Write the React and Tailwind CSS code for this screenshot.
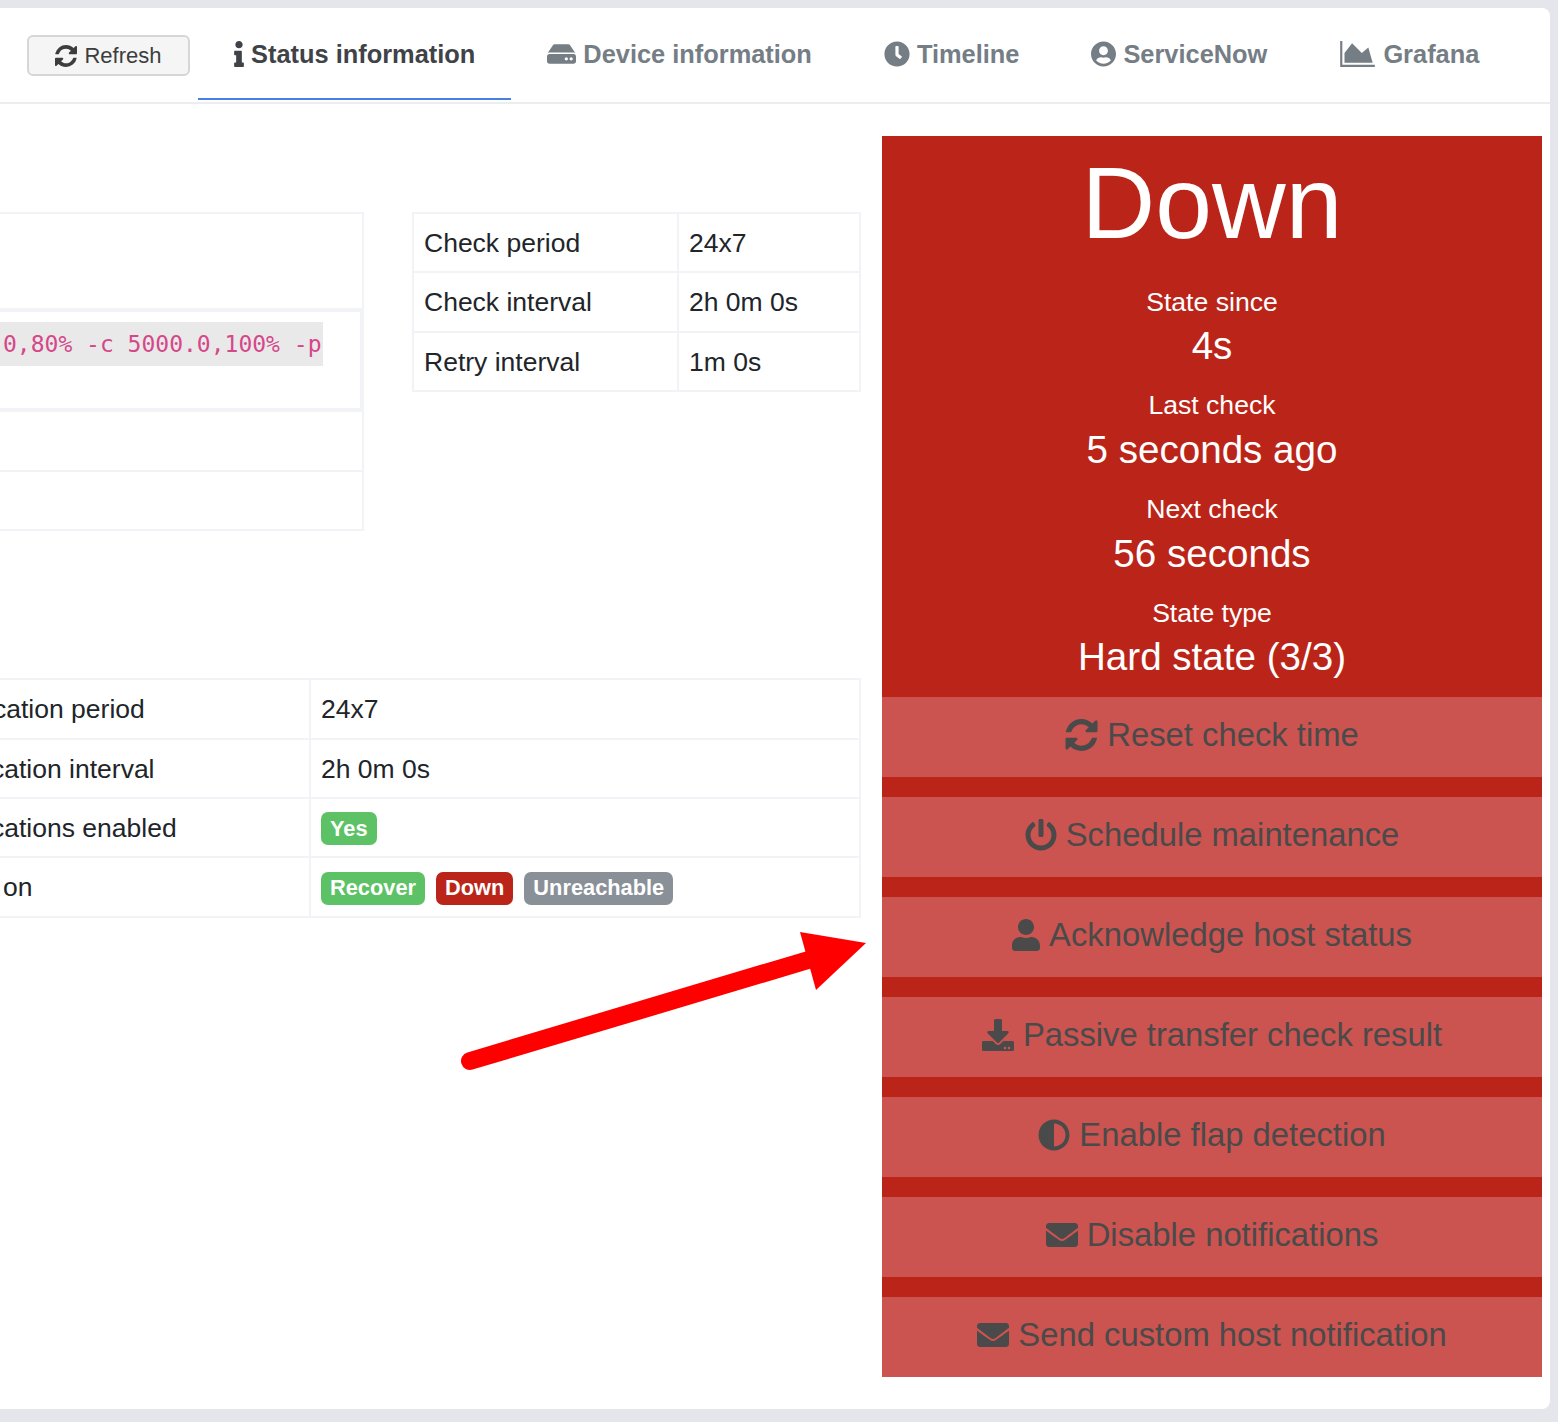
import {
  FaAdjust,
  FaClock,
  FaDownload,
  FaEnvelope,
  FaHdd,
  FaInfo,
  FaPowerOff,
  FaUser,
  FaUserCircle,
} from "react-icons/fa"

const RefreshIcon = ({ className }) => (
  <svg className={className} viewBox="128 128 1536 1536" fill="currentColor">
    <path d="M1639 1056q0 5-1 7-64 268-268 434.5t-478 166.5q-146 0-282.5-55t-243.5-157l-129 129q-19 19-45 19t-45-19-19-45v-448q0-26 19-45t45-19h448q26 0 45 19t19 45-19 45l-137 137q71 66 161 102t187 36q134 0 250-65t186-179q11-17 53-117 8-23 30-23h192q13 0 22.5 9.5t9.5 22.5zm25-800v448q0 26-19 45t-45 19h-448q-26 0-45-19t-19-45 19-45l138-138q-148-137-349-137-134 0-250 65t-186 179q-11 17-53 117-8 23-30 23h-199q-13 0-22.5-9.5t-9.5-22.5v-7q65-268 270-434.5t480-166.5q146 0 284 55.5t245 156.5l130-129q19-19 45-19t45 19 19 45z" />
  </svg>
)

const AreaChartIcon = ({ className }) => (
  <svg className={className} viewBox="0 128 2048 1536" fill="currentColor">
    <path d="M2048 1536v128h-2048v-1536h128v1408h1920zm-384-1024l256 896h-1664v-576l448-576 576 576z" />
  </svg>
)

const tabs = [
  { label: "Status information", icon: FaInfo, size: "h-[26px] w-[10px]", active: true },
  { label: "Device information", icon: FaHdd, size: "h-[26px] w-[29px]" },
  { label: "Timeline", icon: FaClock, size: "h-[26px] w-[26px]" },
  { label: "ServiceNow", icon: FaUserCircle, size: "h-[26px] w-[25px]" },
  { label: "Grafana", icon: AreaChartIcon, size: "h-[26px] w-[37px]" },
]

const facts = [
  { label: "State since", value: "4s" },
  { label: "Last check", value: "5 seconds ago" },
  { label: "Next check", value: "56 seconds" },
  { label: "State type", value: "Hard state (3/3)" },
]

const actions = [
  { label: "Reset check time", icon: RefreshIcon, size: "h-[32px] w-[33px]" },
  { label: "Schedule maintenance", icon: FaPowerOff, size: "h-[32px] w-[32px]" },
  { label: "Acknowledge host status", icon: FaUser, size: "h-[32px] w-[28px]" },
  { label: "Passive transfer check result", icon: FaDownload, size: "h-[32px] w-[32px]" },
  { label: "Enable flap detection", icon: FaAdjust, size: "h-[32px] w-[32px]" },
  { label: "Disable notifications", icon: FaEnvelope, size: "h-[32px] w-[32px]" },
  { label: "Send custom host notification", icon: FaEnvelope, size: "h-[32px] w-[32px]" },
]

const checks = [
  { label: "Check period", value: "24x7", height: "h-[59px]" },
  { label: "Check interval", value: "2h 0m 0s", height: "h-[60px]" },
  { label: "Retry interval", value: "1m 0s", height: "h-[59px]" },
]

const Badge = ({ color, children }) => (
  <span className={`inline-flex h-[33px] items-center rounded-[7px] px-[9px] pt-[1px] text-[21.8px] font-bold text-white ${color}`}>
    {children}
  </span>
)

const App = () => {
  return (
    <div className="relative h-[1422px] w-[1558px] overflow-hidden bg-[#e4e6eb] pt-2 font-['Liberation_Sans',Arial,sans-serif]">
      <div className="h-[1401px] w-[1550px] rounded-r-lg bg-white">
        <div className="flex h-[96px] border-b-2 border-[#ecedf0] pl-[27px]">
          <button className="mt-[27px] flex h-[41px] w-[163px] items-center justify-center gap-[7px] rounded-md border-2 border-[#d6d6d6] bg-[#f5f5f5] text-[22px] text-[#3d3d3d]">
            <RefreshIcon className="h-[22px] w-[22px]" />
            Refresh
          </button>
          <div className="ml-2 flex">
            {tabs.map((tab) => {
              const Icon = tab.icon
              return (
                <div
                  key={tab.label}
                  className={`flex h-[92px] items-center gap-[7px] border-b-2 px-9 pt-[2px] text-[25.4px] font-bold ${
                    tab.active ? "border-[#4a80e0] text-[#3f4347]" : "border-transparent text-[#757d85]"
                  }`}
                >
                  <Icon className={`shrink-0 ${tab.size}`} />
                  {tab.label}
                </div>
              )
            })}
          </div>
        </div>

        <div className="flex pt-8">
          <div className="w-[882px] pt-[76px] text-[26.5px] text-[#212529]">
            <div className="flex items-start">
              <div className="w-[364px] border-y-2 border-r-2 border-[#f2f3f7]">
                <div className="h-[98px] border-b-4 border-[#f2f3f7]"></div>
                <div className="flex h-[100px] items-start border-r-2 border-b-4 border-[#f2f3f7] pt-[10px]">
                  <code className="flex h-[44px] w-[323px] items-center whitespace-pre bg-[#e9e9e9] pl-[3px] font-['DejaVu_Sans_Mono',monospace] text-[23px] text-[#d6478a]">
                    0,80% -c 5000.0,100% -p
                  </code>
                </div>
                <div className="h-[60px] border-b-2 border-[#f2f3f7]"></div>
                <div className="h-[57px]"></div>
              </div>

              <table className="ml-[48px] w-[449px] table-fixed border-2 border-[#f2f3f7]">
                <tbody>
                  {checks.map((row) => (
                    <tr key={row.label} className={`${row.height} border-b-2 border-[#f2f3f7]`}>
                      <td className="w-[265px] border-r-2 border-[#f2f3f7] pl-[10px] pt-[2px]">{row.label}</td>
                      <td className="pl-[10px] pt-[2px]">{row.value}</td>
                    </tr>
                  ))}
                </tbody>
              </table>
            </div>

            <table className="mt-[147px] w-[861px] table-fixed border-y-2 border-r-2 border-[#f2f3f7]">
              <tbody>
                <tr className="h-[60px] border-b-2 border-[#f2f3f7]">
                  <td className="w-[310px] border-r-2 border-[#f2f3f7] pt-[2px]">
                    <span className="-ml-[7px] block">cation period</span>
                  </td>
                  <td className="pl-[10px] pt-[2px]">24x7</td>
                </tr>
                <tr className="h-[59px] border-b-2 border-[#f2f3f7]">
                  <td className="border-r-2 border-[#f2f3f7] pt-[2px]">
                    <span className="-ml-[9px] block">cation interval</span>
                  </td>
                  <td className="pl-[10px] pt-[2px]">2h 0m 0s</td>
                </tr>
                <tr className="h-[59px] border-b-2 border-[#f2f3f7]">
                  <td className="border-r-2 border-[#f2f3f7] pt-[2px]">
                    <span className="-ml-[9px] block">cations enabled</span>
                  </td>
                  <td className="pl-[10px] pt-[2px]">
                    <div className="flex">
                      <Badge color="bg-[#5cc265]">Yes</Badge>
                    </div>
                  </td>
                </tr>
                <tr className="h-[60px]">
                  <td className="border-r-2 border-[#f2f3f7] pl-[3px] pt-[2px]">on</td>
                  <td className="pl-[10px] pt-[2px]">
                    <div className="flex gap-[11px]">
                      <Badge color="bg-[#5cc265]">Recover</Badge>
                      <Badge color="bg-[#bb2519]">Down</Badge>
                      <Badge color="bg-[#8a9098]">Unreachable</Badge>
                    </div>
                  </td>
                </tr>
              </tbody>
            </table>
          </div>

          <div className="w-[660px] bg-[#bb2519] text-center text-white">
            <div className="flex h-[144px] items-center justify-center pb-[10px] text-[102px] leading-none">Down</div>
            {facts.map((fact) => (
              <div key={fact.label} className="h-[103.75px]">
                <div className="flex h-[44px] items-center justify-center pt-[1px] text-[26.6px]">{fact.label}</div>
                <div className="flex h-[44px] items-center justify-center text-[38.6px]">{fact.value}</div>
              </div>
            ))}
            <div className="h-[2px]"></div>
            <div className="flex flex-col gap-5">
              {actions.map((action) => {
                const Icon = action.icon
                return (
                  <div
                    key={action.label}
                    className="flex h-[80px] items-center justify-center gap-[9px] bg-[#cb5450] pb-[4px] text-[32.8px] text-[#4a4a4a]"
                  >
                    <Icon className={`shrink-0 ${action.size}`} />
                    {action.label}
                  </div>
                )
              })}
            </div>
          </div>
        </div>
      </div>

      <svg className="absolute left-[455px] top-[925px] h-[155px] w-[420px]" viewBox="0 0 420 155" fill="none">
        <path d="M15 136 L360 33" stroke="#ff0000" strokeWidth="18" strokeLinecap="round" />
        <path d="M345 7 L411 18 L361 65 Z" fill="#ff0000" />
      </svg>
    </div>
  )
}

export default App
